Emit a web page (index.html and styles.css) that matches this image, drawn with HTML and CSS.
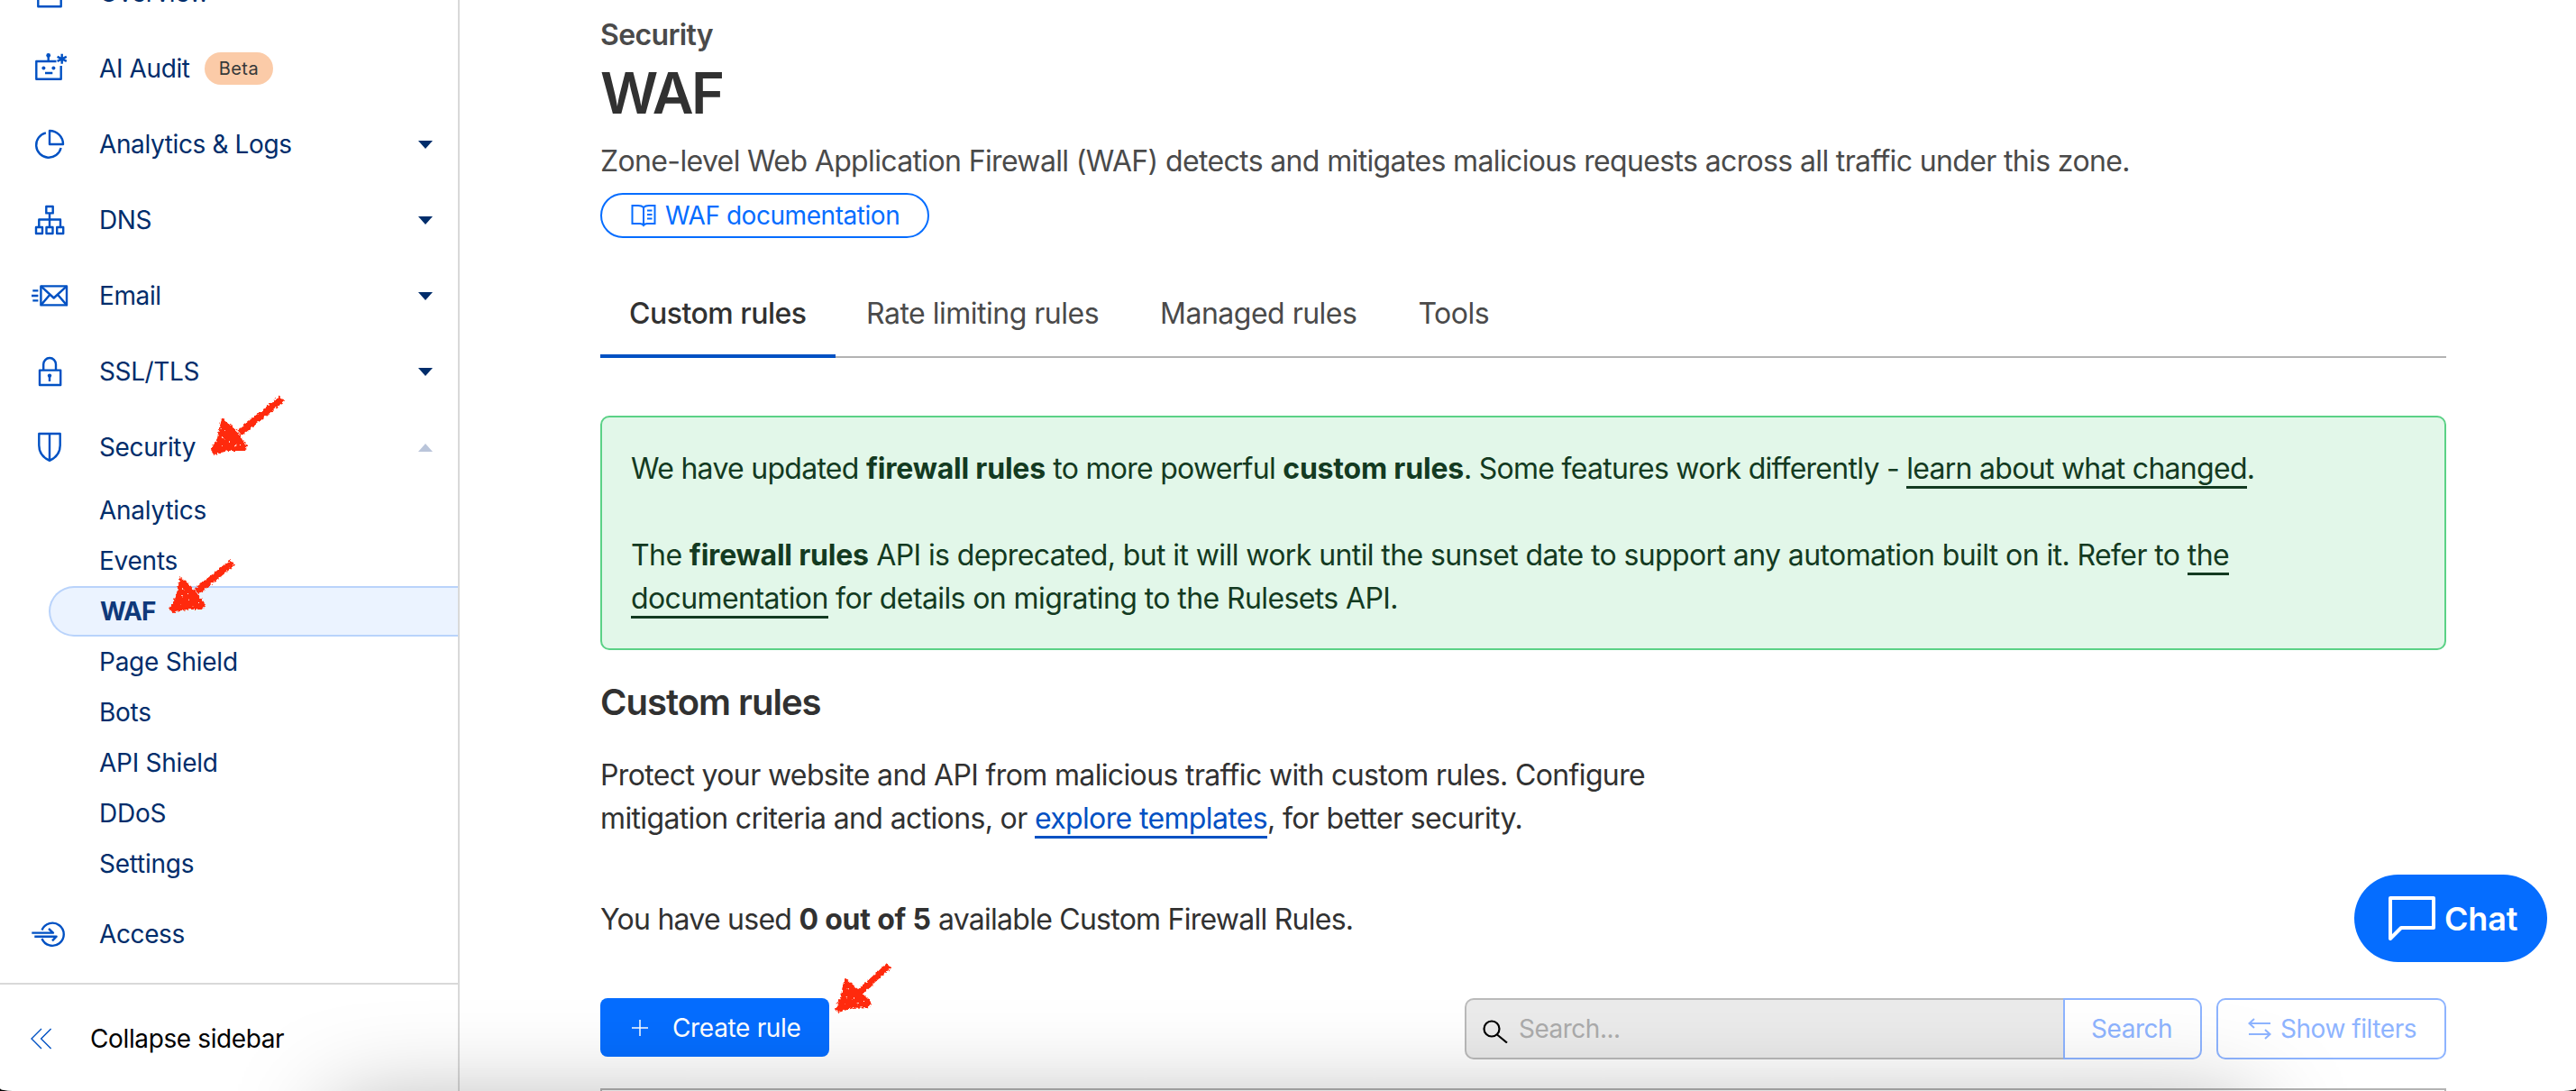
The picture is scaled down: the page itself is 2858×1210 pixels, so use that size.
FILE: index.html
```
<!DOCTYPE html>
<html lang="en">
<head>
    <meta charset="UTF-8">
    <meta name="viewport" content="width=device-width, initial-scale=1.0">
    <title>Security - WAF</title>
    <link rel="stylesheet" href="styles.css">
</head>
<body>
    <div class="page">
        <aside class="sidebar">
            <nav class="nav">
                <a class="nav-item">
                    <svg class="nav-icon" viewBox="0 0 48 48"><path d="M11.3 8H36.7V39.2H11.3Z"/></svg>
                    <span>Overview</span>
                </a>
                <a class="nav-item">
                    <svg class="nav-icon" viewBox="0 0 48 48">
                        <path d="M31.5 16H9.3V35.7H36.7V21M22.7 10V16M19 29H27.3"/>
                        <path d="M37.7 7.8V18.8M32.6 10.8L42.8 15.8M42.8 10.8L32.6 15.8"/>
                        <g class="solid"><circle cx="22.7" cy="9.4" r="2.4"/><circle cx="17.4" cy="23.4" r="2"/><circle cx="28.4" cy="23.4" r="2"/></g>
                    </svg>
                    <span>AI Audit</span>
                    <span class="badge">Beta</span>
                </a>
                <a class="nav-item">
                    <svg class="nav-icon" viewBox="0 0 48 48">
                        <path d="M24 9V24H39A15 15 0 0 0 24 9Z"/>
                        <path d="M19.9 11.3A13.9 13.9 0 1 0 36.6 28"/>
                    </svg>
                    <span>Analytics &amp; Logs</span>
                    <span class="caret"></span>
                </a>
                <a class="nav-item">
                    <svg class="nav-icon" viewBox="0 0 48 48">
                        <path d="M20.3 9H27.7V16.4H20.3ZM9 32H16V39H9ZM20.5 32H27.5V39H20.5ZM32.2 32H39.2V39H32.2Z"/>
                        <path d="M24 16.4V32M12.3 32V23.5H36V32"/>
                    </svg>
                    <span>DNS</span>
                    <span class="caret"></span>
                </a>
                <a class="nav-item">
                    <svg class="nav-icon" viewBox="0 0 48 48">
                        <path d="M14.4 13.4H43V34.4H14.4Z"/>
                        <path d="M14.4 13.4L28.7 26.5L43 13.4M14.4 34.4L24.2 23M43 34.4L33.2 23"/>
                        <path d="M5.3 18.4H11.4M4 24H11.4M5.3 29.4H11.4"/>
                    </svg>
                    <span>Email</span>
                    <span class="caret"></span>
                </a>
                <a class="nav-item">
                    <svg class="nav-icon" viewBox="0 0 48 48">
                        <path d="M13 22.6H36.2V39H13ZM17.2 22.6V16A6.9 7 0 0 1 31 16V22.6M24 29V35"/>
                        <circle class="solid" cx="24" cy="28.6" r="2.2"/>
                    </svg>
                    <span>SSL/TLS</span>
                    <span class="caret"></span>
                </a>
                <a class="nav-item">
                    <svg class="nav-icon" viewBox="0 0 48 48"><path d="M12.3 9H35.7V22C35.7 30 31.5 35.5 24 38.8C16.5 35.5 12.3 30 12.3 22ZM24 9V38.8"/></svg>
                    <span>Security</span>
                    <span class="caret caret-up"></span>
                </a>
                <div class="subnav">
                    <a class="subnav-item">Analytics</a>
                    <a class="subnav-item">Events</a>
                    <a class="subnav-item active">WAF</a>
                    <a class="subnav-item">Page Shield</a>
                    <a class="subnav-item">Bots</a>
                    <a class="subnav-item">API Shield</a>
                    <a class="subnav-item">DDoS</a>
                    <a class="subnav-item">Settings</a>
                </div>
                <a class="nav-item">
                    <svg class="nav-icon" viewBox="0 0 48 48">
                        <path d="M15.5 19.5A12.6 12.6 0 1 1 15.5 29"/>
                        <path d="M4.3 22.6H28L23 18M7.3 26.7H31.6L27 31.3"/>
                    </svg>
                    <span>Access</span>
                </a>
            </nav>
            <div class="sidebar-footer">
                <svg class="collapse-icon" viewBox="0 0 24 24"><path d="M12 1L1 12L12 23M22.6 1L11.6 12L22.6 23"/></svg>
                <span>Collapse sidebar</span>
            </div>
        </aside>

        <main class="content">
            <div class="crumb">Security</div>
            <h1>WAF</h1>
            <p class="description">Zone-level Web Application Firewall (WAF) detects and mitigates malicious requests across all traffic under this zone.</p>
            <a class="doc-link">
                <svg class="doc-icon" viewBox="0 0 28 26">
                    <path d="M14 4C12.5 2.5 11 2 8 2H1.5V22H10C12 22 13 22.5 14 24C15 22.5 16 22 18 22H26.5V2H20C17 2 15.5 2.5 14 4ZM14 4V24M18 7.5H23.5M18 12H23.5M18 16.5H23.5"/>
                </svg>
                <span>WAF documentation</span>
            </a>

            <div class="tabs">
                <a class="tab active">Custom rules</a>
                <a class="tab">Rate limiting rules</a>
                <a class="tab">Managed rules</a>
                <a class="tab">Tools</a>
            </div>

            <div class="alert">
                <p class="alert-lead">We have updated <b>firewall rules</b> to more powerful <b>custom rules</b>. Some features work differently - <a class="link">learn about what changed</a>.</p>
                <p>The <b>firewall rules</b> API is deprecated, but it will work until the sunset date to support any automation built on it. Refer to <a class="link">the<br>documentation</a> for details on migrating to the Rulesets API.</p>
            </div>

            <h2>Custom rules</h2>
            <p class="intro">Protect your website and API from malicious traffic with custom rules. Configure<br>mitigation criteria and actions, or <a class="link">explore templates</a>, for better security.</p>
            <p class="usage">You have used <b>0 out of 5</b> available Custom Firewall Rules.</p>

            <div class="toolbar">
                <button class="btn-create">
                    <svg class="plus-icon" viewBox="0 0 18 18"><path d="M9 0V18M0 9H18"/></svg>
                    <span>Create rule</span>
                </button>
                <div class="search">
                    <div class="search-box">
                        <svg class="search-icon" viewBox="0 0 28 26"><circle cx="10" cy="10" r="8.5"/><path d="M16 16.5L27 25.5"/></svg>
                        <span>Search...</span>
                    </div>
                    <button class="btn-outline btn-search">Search</button>
                </div>
                <button class="btn-outline btn-filters">
                    <svg class="filter-icon" viewBox="0 0 26 24"><path d="M25 6H1.5M7 1L1.5 6L7 11M1 18H24.5M19 13L24.5 18L19 23"/></svg>
                    <span>Show filters</span>
                </button>
            </div>
            <div class="rules-table"></div>
        </main>

        <button class="chat">
            <svg class="chat-icon" viewBox="0 0 52 50"><path d="M2 2H50V35H14L2 47Z"/></svg>
            <span>Chat</span>
        </button>

        <div class="bottom-shadow"></div>

        <!-- Hand-drawn red pointers -->
        <svg class="marker marker-security" viewBox="0 0 84 66">
            <path class="marker-line" d="M33 42L80 4"/>
            <path d="M13 26L23 34L32 42L36 50L42 56L39 62L20 62L5 66L1 61L8 48Z"/>
            <path class="marker-holes" d="M16 38l1 2M14 47l2 1M22 52l1-2M27 57l2-1M33 54l1 1M12 57l2-1M21 43l1 1"/>
        </svg>
        <svg class="marker marker-waf" viewBox="0 0 74 60">
            <path class="marker-line" d="M31 36L71 4"/>
            <path d="M13 20L23 28L30 36L36 44L41 50L38 56L20 56L5 60L1 55L8 42Z"/>
            <path class="marker-holes" d="M16 32l1 2M14 41l2 1M22 46l1-2M27 51l2-1M33 48l1 1M12 51l2-1M21 37l1 1"/>
        </svg>
        <svg class="marker marker-create" viewBox="0 0 64 58">
            <path class="marker-line marker-line-thin" d="M28 34L60 5"/>
            <path d="M11 18L19 25L26 31L33 38L41 46L39 51L20 52L4 57L1 53L7 38Z"/>
            <path class="marker-holes" d="M14 30l1 2M12 39l2 1M20 43l1-2M25 47l2-1M33 44l1 1M11 48l2-1M30 46l1 1"/>
        </svg>
        <svg class="defs">
            <filter id="rough" x="-10%" y="-10%" width="120%" height="120%">
                <feTurbulence type="fractalNoise" baseFrequency="0.35" numOctaves="2" seed="4" result="noise"/>
                <feDisplacementMap in="SourceGraphic" in2="noise" scale="5" xChannelSelector="R" yChannelSelector="G"/>
            </filter>
        </svg>
    </div>
</body>
</html>
```
FILE: styles.css
```
* {
    margin: 0;
    padding: 0;
    box-sizing: border-box;
}

html {
    background: #000;
}

body {
    font-family: Inter, "Liberation Sans", sans-serif;
    font-size: 32px;
    line-height: 48px;
    letter-spacing: -0.64px;
    color: #313131;
}

button {
    font-family: inherit;
    border: none;
}

b {
    font-weight: 700;
    letter-spacing: -0.2px;
}

svg {
    flex: none;
    fill: none;
}

.page {
    position: relative;
    display: flex;
    width: 2858px;
    height: 1210px;
    overflow: hidden;
    background: #fff;
    border-radius: 0 0 14px 14px / 0 0 3px 3px;
}

/* Sidebar */
.sidebar {
    display: flex;
    flex-direction: column;
    justify-content: flex-end;
    flex: none;
    width: 510px;
    overflow: hidden;
    border-right: 2px solid #d9d9d9;
    font-size: 28px;
    letter-spacing: -0.38px;
    color: #002d6b;
}

.nav {
    padding-bottom: 12px;
}

.nav-item {
    display: flex;
    align-items: center;
    height: 84px;
    padding: 0 28px 0 31px;
}

.nav-icon {
    width: 48px;
    height: 48px;
    margin-right: 31px;
    stroke: #0051c3;
    stroke-width: 2.4;
    stroke-linejoin: round;
}

.nav-icon .solid {
    fill: #0051c3;
    stroke: none;
}

.badge {
    height: 36px;
    margin-left: 16px;
    padding: 0 16px;
    border-radius: 18px;
    background: #fbcba8;
    color: #36393a;
    font-size: 20px;
    line-height: 36px;
    letter-spacing: 0.45px;
}

.caret {
    margin-left: auto;
    border-left: 8px solid transparent;
    border-right: 8px solid transparent;
    border-top: 9px solid #002d6b;
}

.caret-up {
    border-top: none;
    border-bottom: 9px solid #bac5da;
}

.subnav {
    padding-bottom: 8px;
}

.subnav-item {
    display: block;
    height: 56px;
    padding-left: 110px;
    line-height: 56px;
    letter-spacing: -0.25px;
}

.subnav-item.active {
    margin-left: 54px;
    padding-left: 55px;
    border: 2px solid #b9d3fb;
    border-right: none;
    border-radius: 28px 0 0 28px;
    background: #ebf3ff;
    color: #0f397a;
    font-weight: 700;
    line-height: 52px;
    letter-spacing: -1px;
}

.sidebar-footer {
    display: flex;
    align-items: center;
    flex: none;
    height: 120px;
    padding: 2px 0 0 34px;
    border-top: 2px solid #d9d9d9;
    color: #000;
}

.collapse-icon {
    width: 24px;
    height: 24px;
    margin-right: 42px;
    stroke: #0051c3;
    stroke-width: 1.4;
}

/* Main column */
.content {
    width: 2048px;
    margin-left: 156px;
    padding-top: 15px;
}

.crumb {
    color: #4a4a4a;
    font-weight: 600;
}

h1 {
    height: 80px;
    font-size: 63px;
    font-weight: 600;
    line-height: 80px;
    letter-spacing: -2.4px;
}

.description {
    margin-top: 12px;
    color: #4a4a4a;
}

.doc-link {
    display: flex;
    align-items: center;
    width: 365px;
    height: 50px;
    margin-top: 11px;
    padding-left: 32px;
    border: 2px solid #056dff;
    border-radius: 25px;
    color: #056dff;
    font-size: 28px;
    letter-spacing: -0.45px;
}

.doc-icon {
    width: 28px;
    height: 26px;
    margin-right: 10px;
    stroke: #056dff;
    stroke-width: 2;
}

.tabs {
    display: flex;
    gap: 4px;
    height: 97px;
    margin-top: 36px;
    box-shadow: inset 0 -2px #b3b3b3;
}

.tab {
    padding: 24px 32px 0;
    color: #4a4a4a;
    letter-spacing: -0.5px;
}

.tab.active {
    width: 261px;
    margin-right: -2px;
    border-bottom: 4px solid #0051c3;
    color: #313131;
    font-weight: 500;
}

.alert {
    height: 260px;
    margin-top: 64px;
    padding: 33px 32px;
    border: 2px solid #5bd186;
    border-radius: 10px;
    background: #e2f7e9;
    color: #133a21;
    letter-spacing: -0.6px;
}

.alert-lead {
    letter-spacing: -0.72px;
}

.alert p + p {
    margin-top: 48px;
}

.link {
    border-bottom: 3px solid;
}

h2 {
    margin-top: 34px;
    font-size: 40px;
    font-weight: 600;
    letter-spacing: -1px;
}

.intro {
    margin-top: 33px;
}

.intro .link {
    color: #0051c3;
}

.usage {
    margin-top: 64px;
    letter-spacing: -0.75px;
}

.toolbar {
    display: flex;
    align-items: flex-start;
    height: 68px;
    margin-top: 63px;
    font-size: 28px;
}

.btn-create {
    display: flex;
    align-items: center;
    width: 254px;
    height: 65px;
    padding-left: 35px;
    border-radius: 8px;
    background: #056dff;
    color: #fff;
    font-size: 28px;
    letter-spacing: -0.33px;
}

.plus-icon {
    width: 18px;
    height: 18px;
    margin-right: 27px;
    stroke: #fff;
    stroke-width: 1.5;
}

.search {
    display: flex;
    margin-left: auto;
}

.search-box {
    display: flex;
    align-items: center;
    width: 664px;
    height: 68px;
    padding-left: 18px;
    border: 2px solid #bababa;
    border-right: none;
    border-radius: 10px 0 0 10px;
    background: #ebebeb;
    color: #acacac;
    letter-spacing: -0.5px;
}

.search-icon {
    width: 28px;
    height: 26px;
    margin: 6px 12px 0 0;
    stroke: #000;
    stroke-width: 2.2;
}

.btn-outline {
    display: flex;
    align-items: center;
    height: 68px;
    border: 2px solid #8eb4ff;
    border-radius: 10px;
    background: #fff;
    color: #8eb4ff;
    font-size: 28px;
    letter-spacing: -0.45px;
}

.btn-search {
    width: 154px;
    padding-left: 29px;
    border-radius: 0 10px 10px 0;
}

.btn-filters {
    width: 255px;
    margin-left: 16px;
    padding-left: 33px;
}

.filter-icon {
    width: 26px;
    height: 24px;
    margin-right: 10px;
    stroke: #8eb4ff;
    stroke-width: 2;
}

.rules-table {
    height: 60px;
    margin-top: 32px;
    border: 2px solid #b3b3b3;
}

/* Floating elements */
.chat {
    position: absolute;
    right: 32px;
    bottom: 143px;
    display: flex;
    align-items: center;
    width: 214px;
    height: 97px;
    padding-left: 38px;
    border-radius: 49px;
    background: #056dff;
    color: #fff;
    font-size: 36px;
    font-weight: 600;
    letter-spacing: -0.2px;
}

.chat-icon {
    width: 52px;
    height: 50px;
    margin-right: 10px;
    stroke: #fff;
    stroke-width: 4;
    stroke-linejoin: round;
}

.bottom-shadow {
    position: absolute;
    left: 410px;
    right: 400px;
    bottom: -80px;
    height: 60px;
    box-shadow: 0 40px 110px 40px rgba(0, 0, 0, 0.34);
    pointer-events: none;
}

.marker {
    position: absolute;
    overflow: visible;
    fill: #ff2a0a;
    filter: url(#rough);
}

.marker-line {
    stroke: #ff2a0a;
    stroke-width: 8;
}

.marker-line-thin {
    stroke-width: 7;
}

.marker-holes {
    stroke: #fff;
    stroke-width: 1;
}

.marker-security {
    left: 233px;
    top: 438px;
    width: 84px;
    height: 66px;
}

.marker-waf {
    left: 187px;
    top: 620px;
    width: 74px;
    height: 60px;
}

.marker-create {
    left: 926px;
    top: 1066px;
    width: 64px;
    height: 58px;
}

.defs {
    position: absolute;
    width: 0;
    height: 0;
}
```
